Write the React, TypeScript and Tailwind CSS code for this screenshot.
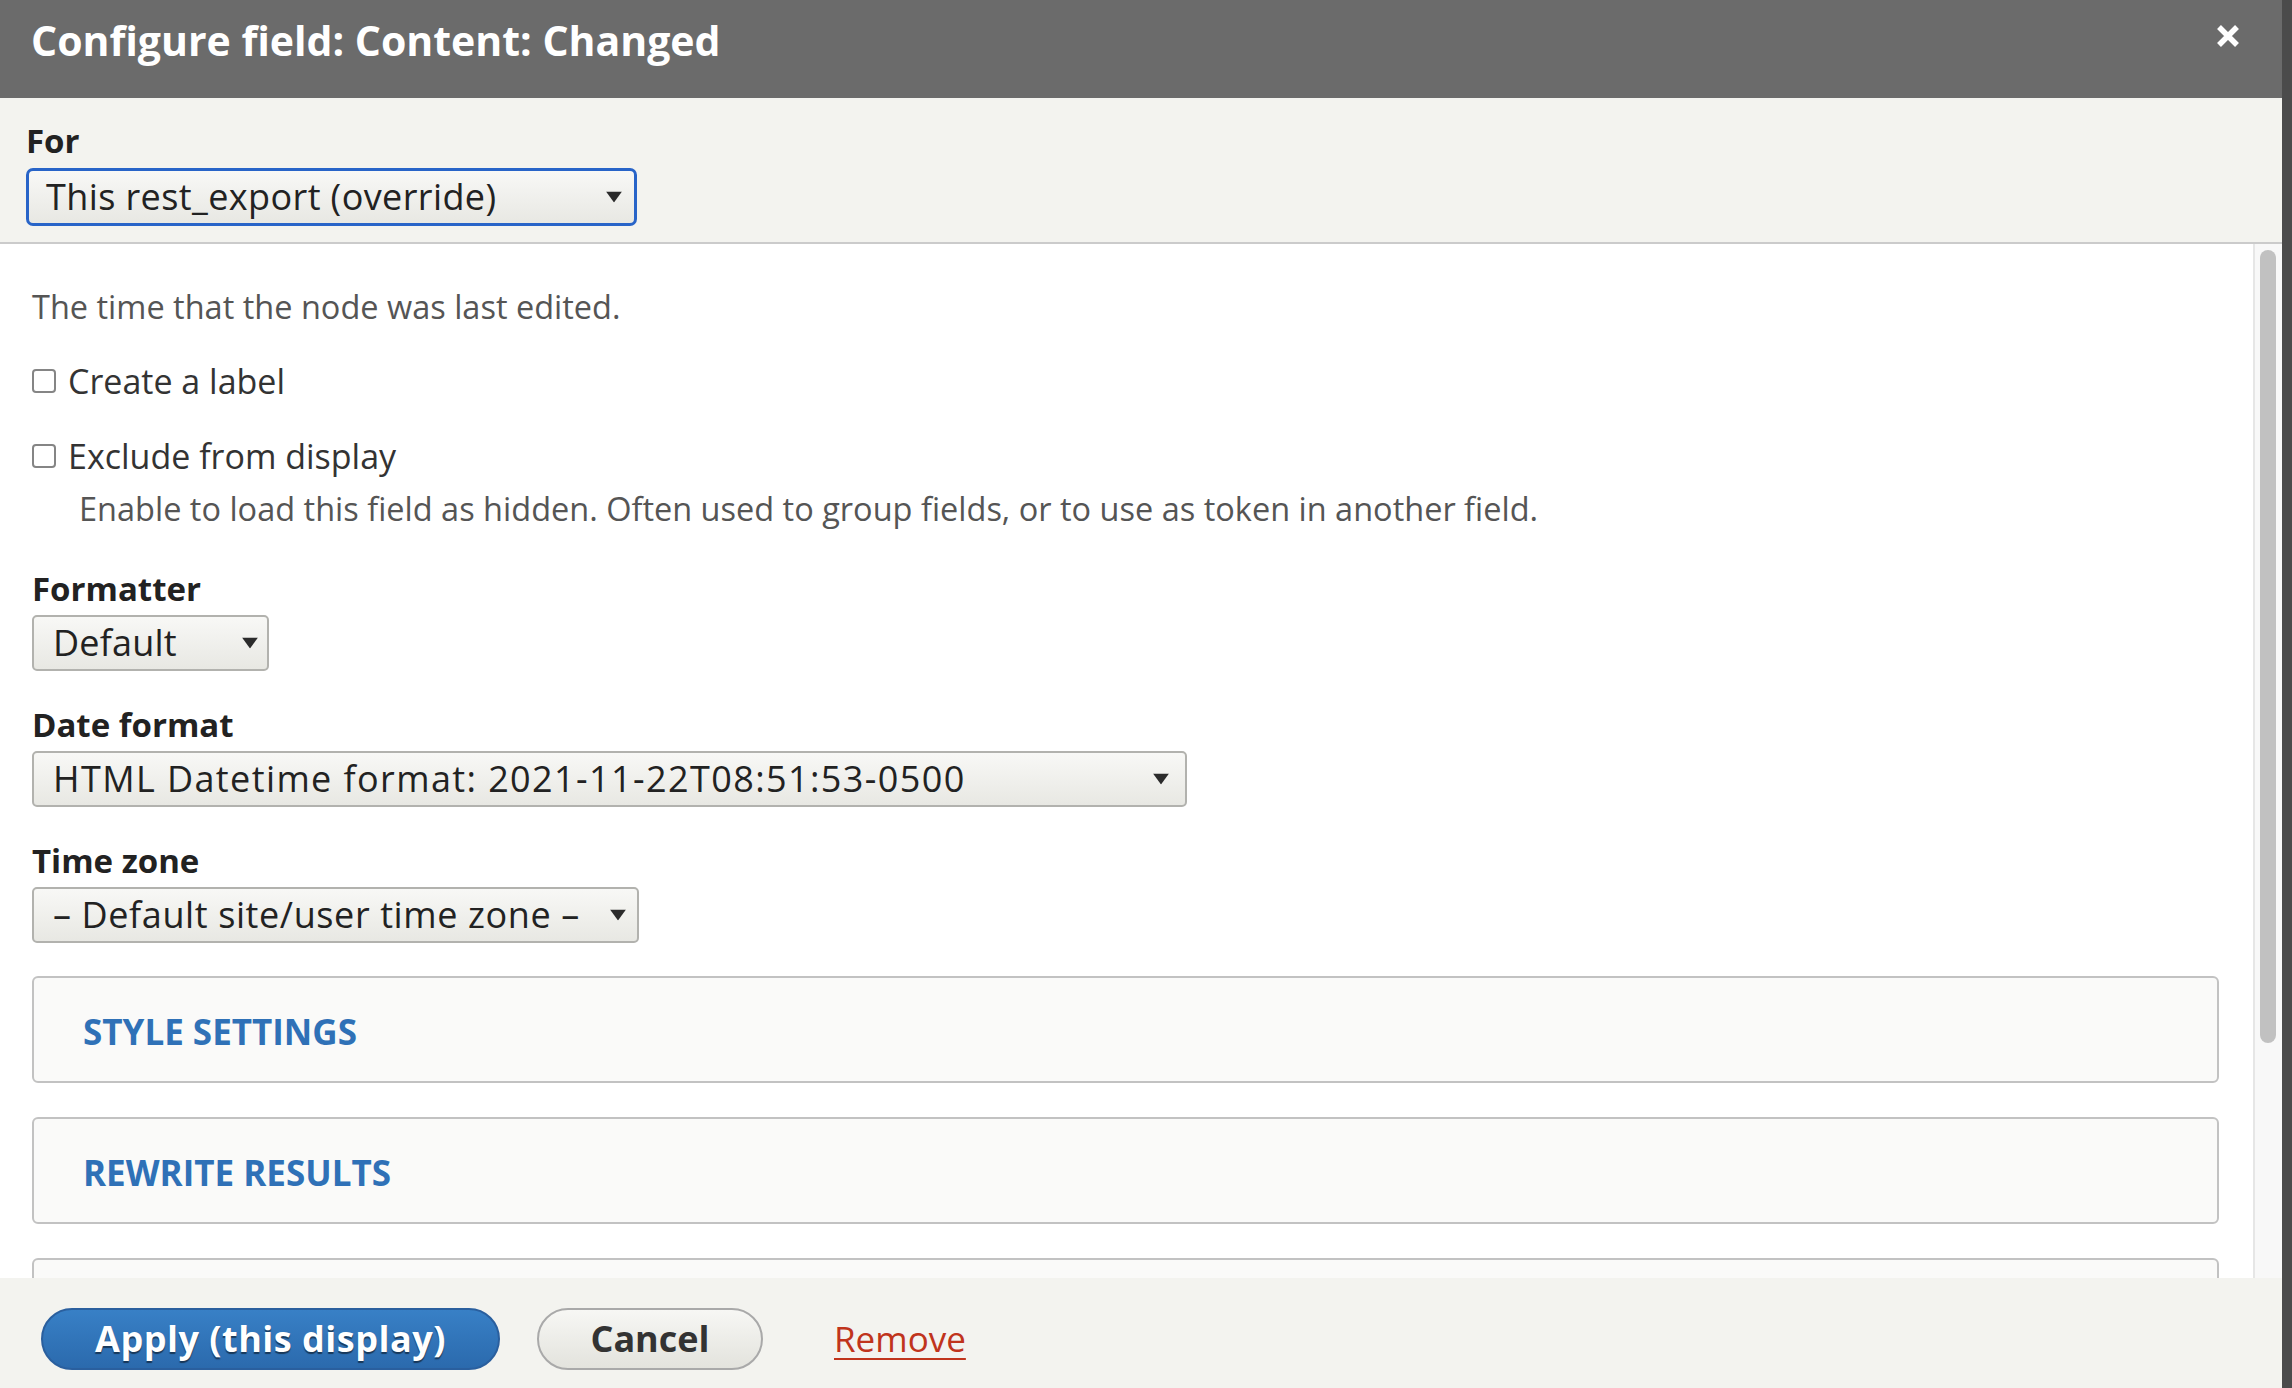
import React from "react";

type SelectProps = {
  value: string;
  width: string;
  arrow: string;
  tracking: string;
  focused?: boolean;
};

function Arrow({ className }: { className: string }) {
  return (
    <svg className={className} width="16" height="11" viewBox="0 0 16 11">
      <path d="M0 0H16L8 11Z" fill="#2b2b2b" />
    </svg>
  );
}

function FakeSelect({ value, width, arrow, tracking, focused }: SelectProps) {
  const border = focused
    ? "h-[58px] border-[3px] border-[#2864c8] rounded-[7px] pl-[17px]"
    : "h-[56px] border-2 border-[#b2b2ae] rounded-[5px] pl-[19px]";
  return (
    <div
      className={`relative flex items-center ${width} ${border} bg-linear-to-b from-[#f8f8f6] to-[#e8e8e3] text-[36px] leading-[50px] text-[#222]`}
    >
      <span className={`whitespace-nowrap ${tracking}`}>{value}</span>
      <Arrow className={`absolute top-1/2 -translate-y-1/2 ${arrow}`} />
    </div>
  );
}

function Checkbox({ label }: { label: string }) {
  return (
    <label className="flex h-[44px] items-center gap-[12px] text-[34px] leading-[44px] text-[#333]">
      <span className="h-[24px] w-[24px] rounded-[4px] border-2 border-[#858585] bg-white" />
      {label}
    </label>
  );
}

function Collapsed({ title, className }: { title?: string; className: string }) {
  return (
    <div
      className={`flex h-[107px] shrink-0 items-center rounded-[6px] border-2 border-[#c2c2c2] bg-[#fafaf9] pl-[49px] ${className}`}
    >
      {title && (
        <span className="pt-[4px] text-[35px] font-bold uppercase leading-[48px] text-[#2f71b7]">
          {title}
        </span>
      )}
    </div>
  );
}

export default function App() {
  return (
    <div className="flex h-[1388px] w-[2292px] overflow-hidden bg-[#4b4b4b] font-['Open_Sans',sans-serif]">
      <div className="flex h-full w-[2282px] flex-col">
        {/* title bar */}
        <div className="flex h-[98px] shrink-0 items-start justify-between bg-[#6b6b6b] pl-[31px] pr-[42px]">
          <h1 className="pt-[15px] text-[41px] font-bold leading-[50px] text-white">
            Configure field: Content: Changed
          </h1>
          <button type="button" className="mt-[24px]">
            <svg width="24" height="24" viewBox="0 0 24 24">
              <path
                d="M3 3L21 21M21 3L3 21"
                stroke="#fff"
                strokeWidth="5.5"
                strokeLinecap="butt"
              />
            </svg>
          </button>
        </div>

        {/* display override */}
        <div className="flex h-[146px] shrink-0 flex-col border-b-2 border-[#cbcbcb] bg-[#f3f3ef] pl-[26px] pt-[21px]">
          <div className="text-[33px] font-bold leading-[44px] text-[#222]">For</div>
          <div className="mt-[5px]">
            <FakeSelect
              value="This rest_export (override)"
              width="w-[611px]"
              arrow="right-[12px]"
              tracking="tracking-[0.4px]"
              focused
            />
          </div>
        </div>

        {/* scrolling body */}
        <div className="flex min-h-0 flex-1 bg-white">
          <div className="flex min-w-0 flex-1 flex-col overflow-hidden pl-[32px] pr-[34px] pt-[43px]">
            <p className="text-[32.5px] leading-[40px] text-[#555]">
              The time that the node was last edited.
            </p>
            <div className="mt-[32px]">
              <Checkbox label="Create a label" />
            </div>
            <div className="mt-[31px]">
              <Checkbox label="Exclude from display" />
            </div>
            <p className="mt-[11px] pl-[47px] text-[32.5px] leading-[40px] text-[#555]">
              Enable to load this field as hidden. Often used to group fields, or to use as
              token in another field.
            </p>

            <div className="mt-[38px] text-[33px] font-bold leading-[44px] text-[#222]">
              Formatter
            </div>
            <div className="mt-[4px]">
              <FakeSelect
                value="Default"
                width="w-[237px]"
                arrow="right-[9px]"
                tracking="tracking-[0.2px]"
              />
            </div>

            <div className="mt-[32px] text-[33px] font-bold leading-[44px] text-[#222]">
              Date format
            </div>
            <div className="mt-[4px]">
              <FakeSelect
                value="HTML Datetime format: 2021-11-22T08:51:53-0500"
                width="w-[1155px]"
                arrow="right-[16px]"
                tracking="tracking-[1.4px]"
              />
            </div>

            <div className="mt-[32px] text-[33px] font-bold leading-[44px] text-[#222]">
              Time zone
            </div>
            <div className="mt-[4px]">
              <FakeSelect
                value="– Default site/user time zone –"
                width="w-[607px]"
                arrow="right-[11px]"
                tracking="tracking-[0.6px]"
              />
            </div>

            <Collapsed title="Style settings" className="mt-[33px]" />
            <Collapsed title="Rewrite results" className="mt-[34px]" />
            <Collapsed className="mt-[34px]" />
          </div>

          {/* scrollbar */}
          <div className="w-[29px] shrink-0 border-l-2 border-[#e6e6e6] bg-[#f8f8f8] pl-[5px] pt-[6px]">
            <div className="h-[793px] w-[16px] rounded-full bg-[#c1c1c1]" />
          </div>
        </div>

        {/* button pane */}
        <div className="flex h-[110px] shrink-0 items-start bg-[#f3f3ef] pl-[41px] pt-[30px]">
          <button
            type="button"
            className="h-[62px] w-[459px] rounded-full border-2 border-[#2a5f9e] bg-linear-to-b from-[#3880c6] to-[#2b6aad] text-[36px] font-bold leading-[56px] tracking-[0.5px] text-white [text-shadow:0_2px_1px_rgba(0,0,0,0.5)]"
          >
            Apply (this display)
          </button>
          <button
            type="button"
            className="ml-[37px] h-[62px] w-[226px] rounded-full border-2 border-[#a9a9a9] bg-linear-to-b from-[#f7f7f4] to-[#e3e3dd] text-[36px] font-bold leading-[56px] text-[#333]"
          >
            Cancel
          </button>
          <a
            href="#"
            className="ml-[71px] text-[35px] leading-[62px] text-[#c0341c] underline decoration-2 underline-offset-[6px]"
          >
            Remove
          </a>
        </div>
      </div>
    </div>
  );
}
